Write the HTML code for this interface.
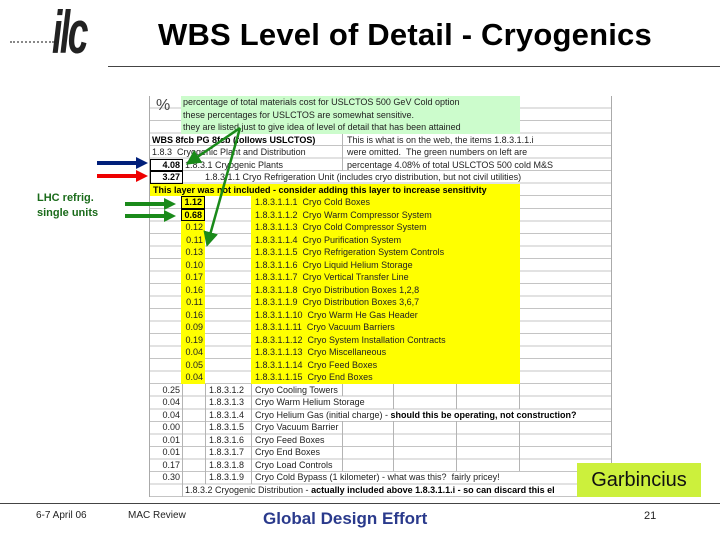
<!DOCTYPE html>
<html><head><meta charset="utf-8"><style>
body{margin:0;width:720px;height:540px;background:#fff;position:relative;overflow:hidden;font-family:"Liberation Sans",Arial,sans-serif}
.a{position:absolute}
#t{position:absolute;left:149px;top:96px;width:463px;height:401px;border-left:1px solid #aaa;border-right:1px solid #aaa;box-sizing:border-box;
background:repeating-linear-gradient(to bottom,#fff 0,#fff 11.53px,#c4c4c4 11.53px,#c4c4c4 12.53px);font-size:9px;color:#222}
.r{position:relative;height:12.53px;white-space:nowrap;line-height:12.5px}
.r span{position:absolute;top:0;height:12.53px;box-sizing:border-box}
.v{border-left:1px solid #b4b4b4}
.n{text-align:right;padding-right:2px}
.y{background:#ffff00}
.g{background:#ccfccc}
.bx{border:1.5px solid #000!important;font-weight:bold;color:#000;line-height:10px}
b{color:#000}
</style></head><body>
<!-- logo -->
<div class="a" style="left:10px;top:41px;width:44px;border-top:2px dotted #888"></div>
<div class="a" style="left:52px;top:0px;font:italic bold 60px/66px 'Liberation Sans',sans-serif;letter-spacing:-4px;color:#222;transform:scaleX(0.62);transform-origin:left">ilc</div>
<div class="a" style="left:158px;top:17px;font-weight:bold;font-size:31px;color:#000;letter-spacing:0.2px">WBS Level of Detail - Cryogenics</div>
<div class="a" style="left:108px;top:66px;width:612px;height:1px;background:#444"></div>

<div id="t">
<div class="r"><span class="g" style="left:31px;width:339px;height:37.6px;padding-left:2px;line-height:12.5px">percentage of total materials cost for USLCTOS 500 GeV Cold option<br>these percentages for USLCTOS are somewhat sensitive.<br>they are listed just to give idea of level of detail that has been attained</span><span style="left:6px;top:4px;font-size:16px;color:#444">%</span></div>
<div class="r"></div><div class="r"></div>
<div class="r"><span style="left:2px"><b>WBS 8fcb PG 8fcb (follows USLCTOS)</b></span><span class="v" style="left:192px;padding-left:4px">This is what is on the web, the items 1.8.3.1.1.i</span></div>
<div class="r"><span style="left:2px">1.8.3 &nbsp;Cryogenic Plant and Distribution</span><span class="v" style="left:192px;padding-left:4px">were omitted. &nbsp;The green numbers on left are</span></div>
<div class="r"><span class="bx n" style="left:0;width:33px">4.08</span><span style="left:35px">1.8.3.1 Cryogenic Plants</span><span class="v" style="left:192px;padding-left:4px">percentage 4.08% of total USLCTOS 500 cold M&amp;S</span></div>
<div class="r"><span class="bx n" style="left:0;width:33px">3.27</span><span style="left:55px">1.8.3.1.1 Cryo Refrigeration Unit (includes cryo distribution, but not civil utilities)</span></div>
<div class="r"><span class="y" style="left:0;width:370px;padding-left:3px"><b>This layer was not included - consider adding this layer to increase sensitivity</b></span></div>
<div class="r"><span class="y bx n" style="left:31px;width:24px">1.12</span><span class="y" style="left:101px;width:269px;padding-left:4px">1.8.3.1.1.1 &nbsp;Cryo Cold Boxes</span></div>
<div class="r"><span class="y bx n" style="left:31px;width:24px">0.68</span><span class="y" style="left:101px;width:269px;padding-left:4px">1.8.3.1.1.2 &nbsp;Cryo Warm Compressor System</span></div>
<div class="r"><span class="y n" style="left:31px;width:24px">0.12</span><span class="y" style="left:101px;width:269px;padding-left:4px">1.8.3.1.1.3 &nbsp;Cryo Cold Compressor System</span></div>
<div class="r"><span class="y n" style="left:31px;width:24px">0.11</span><span class="y" style="left:101px;width:269px;padding-left:4px">1.8.3.1.1.4 &nbsp;Cryo Purification System</span></div>
<div class="r"><span class="y n" style="left:31px;width:24px">0.13</span><span class="y" style="left:101px;width:269px;padding-left:4px">1.8.3.1.1.5 &nbsp;Cryo Refrigeration System Controls</span></div>
<div class="r"><span class="y n" style="left:31px;width:24px">0.10</span><span class="y" style="left:101px;width:269px;padding-left:4px">1.8.3.1.1.6 &nbsp;Cryo Liquid Helium Storage</span></div>
<div class="r"><span class="y n" style="left:31px;width:24px">0.17</span><span class="y" style="left:101px;width:269px;padding-left:4px">1.8.3.1.1.7 &nbsp;Cryo Vertical Transfer Line</span></div>
<div class="r"><span class="y n" style="left:31px;width:24px">0.16</span><span class="y" style="left:101px;width:269px;padding-left:4px">1.8.3.1.1.8 &nbsp;Cryo Distribution Boxes 1,2,8</span></div>
<div class="r"><span class="y n" style="left:31px;width:24px">0.11</span><span class="y" style="left:101px;width:269px;padding-left:4px">1.8.3.1.1.9 &nbsp;Cryo Distribution Boxes 3,6,7</span></div>
<div class="r"><span class="y n" style="left:31px;width:24px">0.16</span><span class="y" style="left:101px;width:269px;padding-left:4px">1.8.3.1.1.10 &nbsp;Cryo Warm He Gas Header</span></div>
<div class="r"><span class="y n" style="left:31px;width:24px">0.09</span><span class="y" style="left:101px;width:269px;padding-left:4px">1.8.3.1.1.11 &nbsp;Cryo Vacuum Barriers</span></div>
<div class="r"><span class="y n" style="left:31px;width:24px">0.19</span><span class="y" style="left:101px;width:269px;padding-left:4px">1.8.3.1.1.12 &nbsp;Cryo System Installation Contracts</span></div>
<div class="r"><span class="y n" style="left:31px;width:24px">0.04</span><span class="y" style="left:101px;width:269px;padding-left:4px">1.8.3.1.1.13 &nbsp;Cryo Miscellaneous</span></div>
<div class="r"><span class="y n" style="left:31px;width:24px">0.05</span><span class="y" style="left:101px;width:269px;padding-left:4px">1.8.3.1.1.14 &nbsp;Cryo Feed Boxes</span></div>
<div class="r"><span class="y n" style="left:31px;width:24px">0.04</span><span class="y" style="left:101px;width:269px;padding-left:4px">1.8.3.1.1.15 &nbsp;Cryo End Boxes</span></div>
<div class="r"><span class="n" style="left:0;width:32px">0.25</span><span class="v" style="left:32px;width:23px"></span><span class="v" style="left:55px;padding-left:3px">1.8.3.1.2</span><span class="v" style="left:101px;width:91px;padding-left:3px">Cryo Cooling Towers</span><span class="v" style="left:192px;width:51px"></span><span class="v" style="left:243px;width:63px"></span><span class="v" style="left:306px;width:63px"></span><span class="v" style="left:369px;width:93px"></span></div>
<div class="r"><span class="n" style="left:0;width:32px">0.04</span><span class="v" style="left:32px;width:23px"></span><span class="v" style="left:55px;padding-left:3px">1.8.3.1.3</span><span class="v" style="left:101px;padding-left:3px">Cryo Warm Helium Storage</span><span class="v" style="left:243px;width:63px"></span><span class="v" style="left:306px;width:63px"></span><span class="v" style="left:369px;width:93px"></span></div>
<div class="r"><span class="n" style="left:0;width:32px">0.04</span><span class="v" style="left:32px;width:23px"></span><span class="v" style="left:55px;padding-left:3px">1.8.3.1.4</span><span class="v" style="left:101px;padding-left:3px">Cryo Helium Gas (initial charge) - <b>should this be operating, not construction?</b></span></div>
<div class="r"><span class="n" style="left:0;width:32px">0.00</span><span class="v" style="left:32px;width:23px"></span><span class="v" style="left:55px;padding-left:3px">1.8.3.1.5</span><span class="v" style="left:101px;width:91px;padding-left:3px">Cryo Vacuum Barrier</span><span class="v" style="left:192px;width:51px"></span><span class="v" style="left:243px;width:63px"></span><span class="v" style="left:306px;width:63px"></span><span class="v" style="left:369px;width:93px"></span></div>
<div class="r"><span class="n" style="left:0;width:32px">0.01</span><span class="v" style="left:32px;width:23px"></span><span class="v" style="left:55px;padding-left:3px">1.8.3.1.6</span><span class="v" style="left:101px;width:91px;padding-left:3px">Cryo Feed Boxes</span><span class="v" style="left:192px;width:51px"></span><span class="v" style="left:243px;width:63px"></span><span class="v" style="left:306px;width:63px"></span><span class="v" style="left:369px;width:93px"></span></div>
<div class="r"><span class="n" style="left:0;width:32px">0.01</span><span class="v" style="left:32px;width:23px"></span><span class="v" style="left:55px;padding-left:3px">1.8.3.1.7</span><span class="v" style="left:101px;width:91px;padding-left:3px">Cryo End Boxes</span><span class="v" style="left:192px;width:51px"></span><span class="v" style="left:243px;width:63px"></span><span class="v" style="left:306px;width:63px"></span><span class="v" style="left:369px;width:93px"></span></div>
<div class="r"><span class="n" style="left:0;width:32px">0.17</span><span class="v" style="left:32px;width:23px"></span><span class="v" style="left:55px;padding-left:3px">1.8.3.1.8</span><span class="v" style="left:101px;width:91px;padding-left:3px">Cryo Load Controls</span><span class="v" style="left:192px;width:51px"></span><span class="v" style="left:243px;width:63px"></span><span class="v" style="left:306px;width:63px"></span><span class="v" style="left:369px;width:93px"></span></div>
<div class="r"><span class="n" style="left:0;width:32px">0.30</span><span class="v" style="left:32px;width:23px"></span><span class="v" style="left:55px;padding-left:3px">1.8.3.1.9</span><span class="v" style="left:101px;padding-left:3px">Cryo Cold Bypass (1 kilometer) - what was this? &nbsp;fairly pricey!</span></div>
<div class="r"><span class="v" style="left:32px;padding-left:2px">1.8.3.2 Cryogenic Distribution - <b>actually included above 1.8.3.1.1.i - so can discard this el</b></span></div>
</div>

<div class="a" style="left:577px;top:463px;width:124px;height:34px;background:#ccf03c;font-size:20px;line-height:34px;text-align:center;color:#111">Garbincius</div>

<div class="a" style="left:37px;top:191px;font-size:11px;font-weight:bold;color:#1a6b1a;line-height:15px">LHC refrig.<br>single units</div>

<svg class="a" style="left:0;top:0" width="720" height="540">
<defs>
<marker id="ag" markerWidth="6" markerHeight="6" refX="4" refY="3" orient="auto"><path d="M0,0L6,3L0,6z" fill="#1a8a1a"/></marker>
</defs>
<path d="M97,163H138" stroke="#001f7a" stroke-width="4"/><path d="M136,157L148,163L136,169z" fill="#001f7a"/>
<path d="M97,176H138" stroke="#e00" stroke-width="4"/><path d="M136,170L148,176L136,182z" fill="#e00"/>
<path d="M125,204H166" stroke="#1a8a1a" stroke-width="4"/><path d="M164,198L176,204L164,210z" fill="#1a8a1a"/>
<path d="M125,216H166" stroke="#1a8a1a" stroke-width="4"/><path d="M164,210L176,216L164,222z" fill="#1a8a1a"/>
<path d="M240,128L190,162" stroke="#1a8a1a" stroke-width="2.5" marker-end="url(#ag)"/>
<path d="M240,128L208,242" stroke="#1a8a1a" stroke-width="2.5" marker-end="url(#ag)"/>
</svg>

<div class="a" style="left:0;top:503px;width:720px;height:1px;background:#444"></div>
<div class="a" style="left:36px;top:510px;font-size:10px;color:#222">6-7 April 06</div>
<div class="a" style="left:128px;top:510px;font-size:10px;color:#222">MAC Review</div>
<div class="a" style="left:263px;top:509px;font-size:17px;font-weight:bold;color:#2a3a8c">Global Design Effort</div>
<div class="a" style="left:644px;top:510px;font-size:11px;color:#222">21</div>
</body></html>
